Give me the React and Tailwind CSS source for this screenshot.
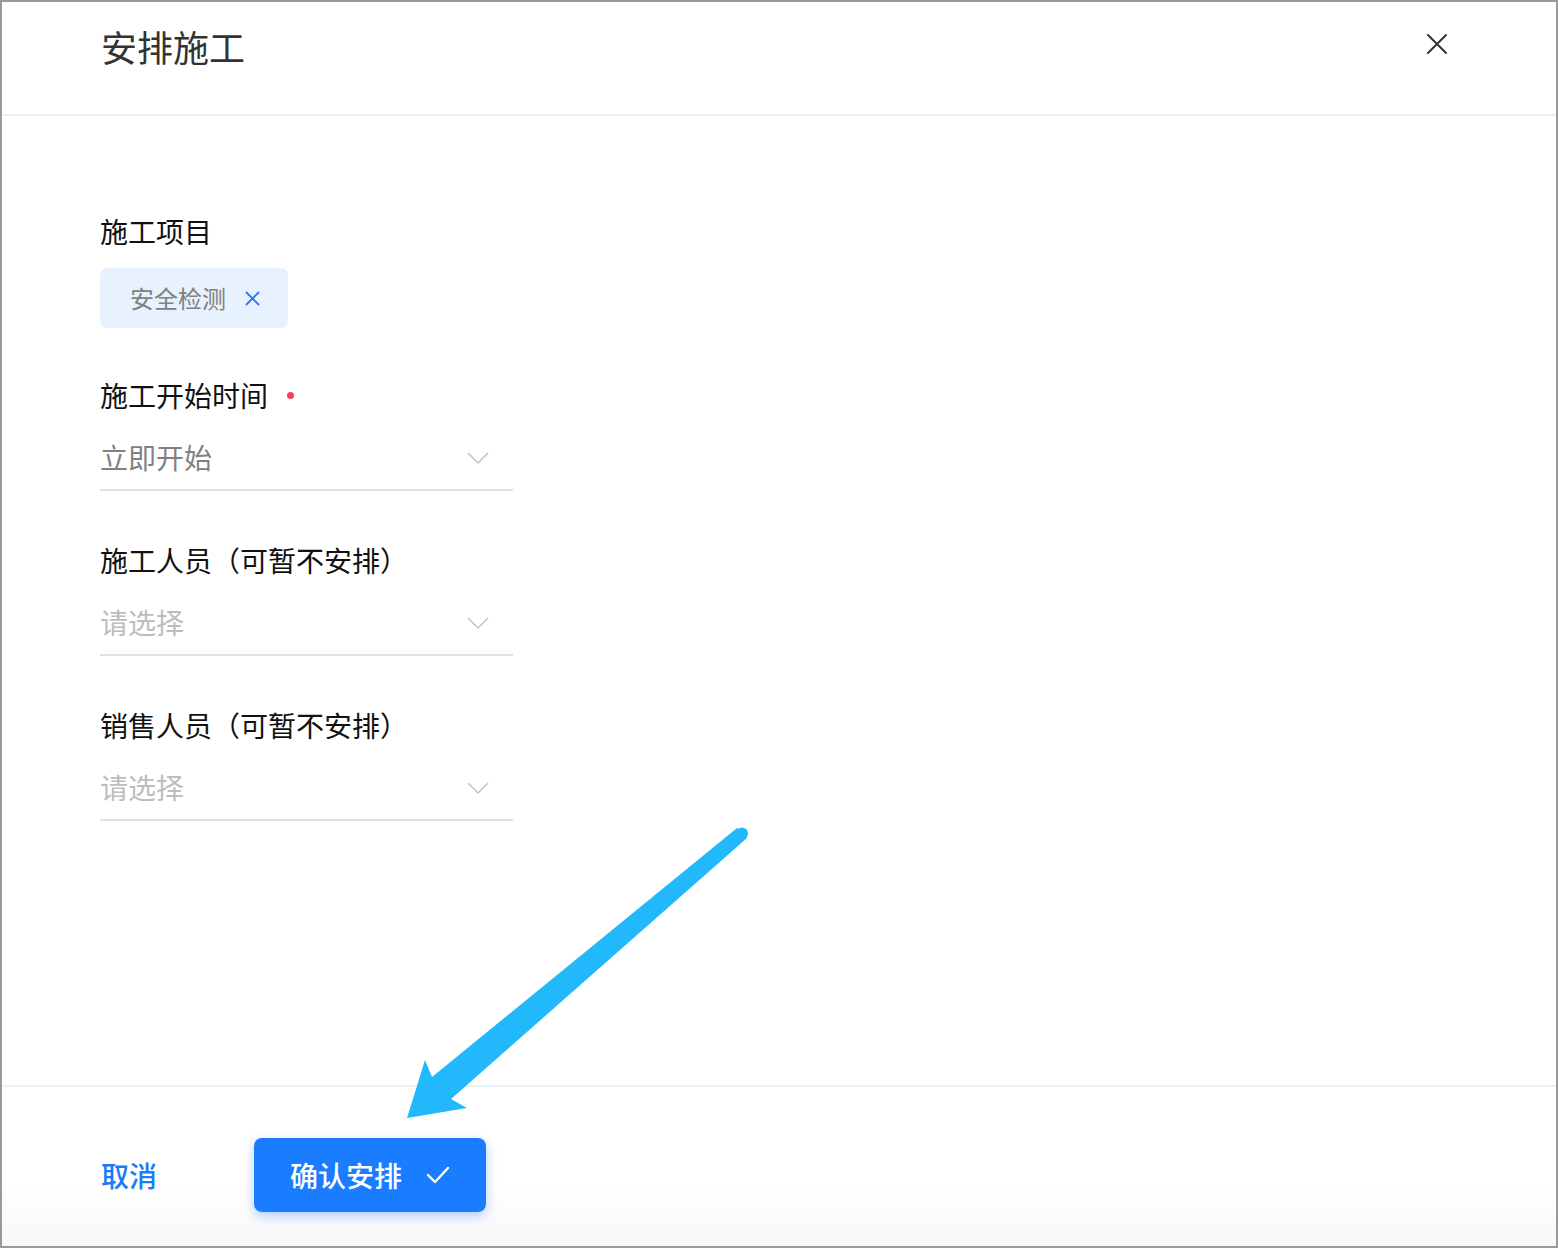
import React from 'react';

const font = { fontFamily: '"Noto Sans CJK SC", "Noto Sans", sans-serif' };

const Chevron = () => (
    <svg width="22" height="12" viewBox="0 0 22 12" fill="none">
        <path d="M1 1 L11 11 L21 1" stroke="#c4c6cc" strokeWidth="1.6" strokeLinejoin="round" />
    </svg>
);

const Select = ({ value, placeholder }) => (
    <div className="mt-[22px] w-[413px] flex items-center justify-between h-[40px] box-content border-b-2 border-[#dfe1e8] pb-[12px]">
        <span className={`text-[28px] leading-[40px] ${value ? 'text-[#808080]' : 'text-[#bdbdbd]'}`}>
            {value || placeholder}
        </span>
        <span className="mr-[24px] mt-[2px]">
            <Chevron />
        </span>
    </div>
);

const Field = ({ label, required, value }) => (
    <div className="mt-[49px]">
        <div className="flex items-center h-[40px]">
            <span className="text-[28px] leading-[40px] text-[#111]">{label}</span>
            {required && <span className="ml-[19px] w-[7px] h-[7px] rounded-full bg-[#f04654]" />}
        </div>
        <Select value={value} placeholder="请选择" />
    </div>
);

export default function App() {
    return (
        <div style={font} className="relative w-[1558px] h-[1248px] border-2 border-[#9a9a9a] bg-white flex flex-col">
            {/* header */}
            <div className="h-[114px] shrink-0 border-b-2 border-[#edf0f6] flex items-start justify-between pl-[99px] pr-[108px]">
                <h1 className="pt-[24px] text-[36px] leading-[40px] text-[#333] font-normal">安排施工</h1>
                <svg className="mt-[31px]" width="22" height="22" viewBox="0 0 22 22" fill="none">
                    <path d="M2 2 L20 20 M20 2 L2 20" stroke="#333" strokeWidth="2" strokeLinecap="round" />
                </svg>
            </div>

            {/* body */}
            <div className="flex-1 pl-[98px] pt-[95px]">
                <div className="h-[40px] text-[28px] leading-[40px] text-[#111]">施工项目</div>
                <div className="mt-[17px] inline-flex items-center h-[60px] w-[188px] pl-[30px] rounded-[7px] bg-[#e8f1fe]">
                    <span className="text-[24px] leading-[30px] text-[#808080]">安全检测</span>
                    <svg className="ml-[19px]" width="15" height="15" viewBox="0 0 15 15" fill="none">
                        <path d="M1.5 1.5 L13.5 13.5 M13.5 1.5 L1.5 13.5" stroke="#1a7cf5" strokeWidth="1.8" strokeLinecap="round" />
                    </svg>
                </div>
                <div className="-mt-[2px]">
                    <Field label="施工开始时间" required value="立即开始" />
                    <Field label="施工人员（可暂不安排）" />
                    <Field label="销售人员（可暂不安排）" />
                </div>
            </div>

            {/* footer */}
            <div className="h-[161px] shrink-0 border-t-2 border-[#edf0f6] bg-gradient-to-b from-white from-60% to-[#f8f8f8] pl-[99px] pt-[51px]">
                <div className="flex items-center h-[74px]">
                    <span className="text-[28px] leading-[40px] text-[#1a7cf5] font-medium">取消</span>
                    <button className="ml-[97px] h-[74px] w-[232px] rounded-[8px] bg-[#1a7cff] flex items-center pl-[36px] shadow-[0_4px_12px_rgba(26,124,255,0.35)]">
                        <span className="text-[28px] leading-[40px] text-white font-medium">确认安排</span>
                        <svg className="ml-[24px]" width="24" height="18" viewBox="0 0 24 18" fill="none">
                            <path d="M2 9 L9 16 L22 2" stroke="#fff" strokeWidth="2.4" strokeLinecap="round" strokeLinejoin="round" />
                        </svg>
                    </button>
                </div>
            </div>

            {/* annotation arrow */}
            <svg className="absolute left-0 top-0 pointer-events-none" width="1558" height="1248" viewBox="0 0 1558 1248">
                <circle cx="740" cy="831.5" r="6" fill="#22b8fc" />
                <polygon
                    points="735,826 430,1075 423,1058 405,1116 465,1106 449,1097 745,836"
                    fill="#22b8fc"
                />
            </svg>
        </div>
    );
}
